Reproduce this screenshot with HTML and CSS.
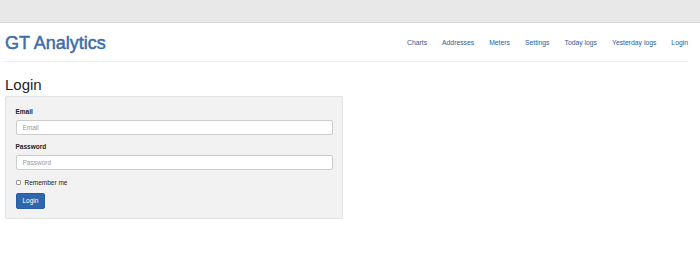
FILE: index.html
```html
<!DOCTYPE html>
<html lang="en">
<head>
  <meta charset="UTF-8" />
  <meta name="viewport" content="width=700, height=274" />
  <title>GT Analytics - Login</title>
  <link rel="stylesheet" href="styles.css">
</head>
<body>
  <div class="top-strip"></div>

  <div class="container">
    <div class="navbar">
      <a class="brand" href="#">GT Analytics</a>
      <ul class="nav">
        <li><a href="#">Charts</a></li>
        <li><a href="#">Addresses</a></li>
        <li><a href="#">Meters</a></li>
        <li><a href="#">Settings</a></li>
        <li><a href="#">Today logs</a></li>
        <li><a href="#">Yesterday logs</a></li>
        <li><a href="#">Login</a></li>
      </ul>
    </div>

    <h2>Login</h2>

    <form class="well">
      <div class="form-group">
        <label for="email">Email</label>
        <input type="text" id="email" placeholder="Email" />
      </div>
      <div class="form-group">
        <label for="password">Password</label>
        <input type="password" id="password" placeholder="Password" />
      </div>
      <div class="checkbox">
        <input type="checkbox" id="remember" />
        <label for="remember">Remember me</label>
      </div>
      <button type="submit" class="btn">Login</button>
    </form>
  </div>
</body>
</html>
```

FILE: styles.css
```css
body {
  margin: 0;
  padding: 0;
  font-family: "Liberation Sans", Arial, Helvetica, sans-serif;
  font-size: 6.5px;
  color: #222;
  background: #ffffff;
  width: 700px;
  height: 274px;
  overflow: hidden;
}

.top-strip {
  height: 23px;
  background-color: #e8e8e8;
  border-bottom: 1px solid #d6d6d6;
  box-sizing: border-box;
}

.container {
  padding: 0 12px 0 4px;
}

.navbar {
  display: flex;
  justify-content: space-between;
  align-items: center;
  height: 38px;
  border-bottom: 1px solid #eeeeee;
}

.brand {
  font-size: 18px;
  color: #3a6ea9;
  text-decoration: none;
  padding-left: 1px;
  margin-top: 2px;
  -webkit-text-stroke: 0.5px #3a6ea9;
}

.nav {
  display: flex;
  list-style: none;
  margin: 0 -7.5px 0 0;
  padding: 0;
}

.nav a {
  display: block;
  padding: 0 7.5px;
  color: #2c5b9b;
  text-decoration: none;
  font-size: 6.8px;
}

h2 {
  font-size: 15px;
  font-weight: normal;
  line-height: 17px;
  margin: 14px 0 3px 1px;
  color: #1e1e1e;
}

.well {
  width: 338px;
  box-sizing: border-box;
  margin: 0 0 0 1px;
  padding: 9.5px 9.5px 9px 9.5px;
  background-color: #f2f2f2;
  border: 1px solid #e3e3e3;
  border-radius: 2px;
}

.form-group {
  margin-bottom: 7px;
}

.form-group label {
  display: block;
  font-weight: bold;
  line-height: 10px;
  margin-bottom: 3px;
}

.form-group input {
  display: block;
  width: 100%;
  height: 15px;
  box-sizing: border-box;
  padding: 0 6px;
  border: 1px solid #cccccc;
  border-radius: 2px;
  background: #ffffff;
  font-family: inherit;
  font-size: 6.5px;
  color: #555;
  outline: none;
}

.form-group input::placeholder {
  color: #999999;
}

.checkbox {
  display: flex;
  align-items: center;
  height: 12px;
  margin-bottom: 4px;
}

.checkbox input {
  appearance: none;
  width: 5px;
  height: 5px;
  margin: 0 4px 0 0;
  border: 1px solid #999;
  border-radius: 1px;
  background: #ffffff;
  box-sizing: border-box;
}

.checkbox label {
  line-height: 12px;
}

.btn {
  height: 16px;
  padding: 0 6px;
  border: 1px solid #285d9f;
  border-radius: 2px;
  background-color: #2f67ae;
  color: #ffffff;
  font-family: inherit;
  font-size: 6.5px;
  cursor: pointer;
}
```
